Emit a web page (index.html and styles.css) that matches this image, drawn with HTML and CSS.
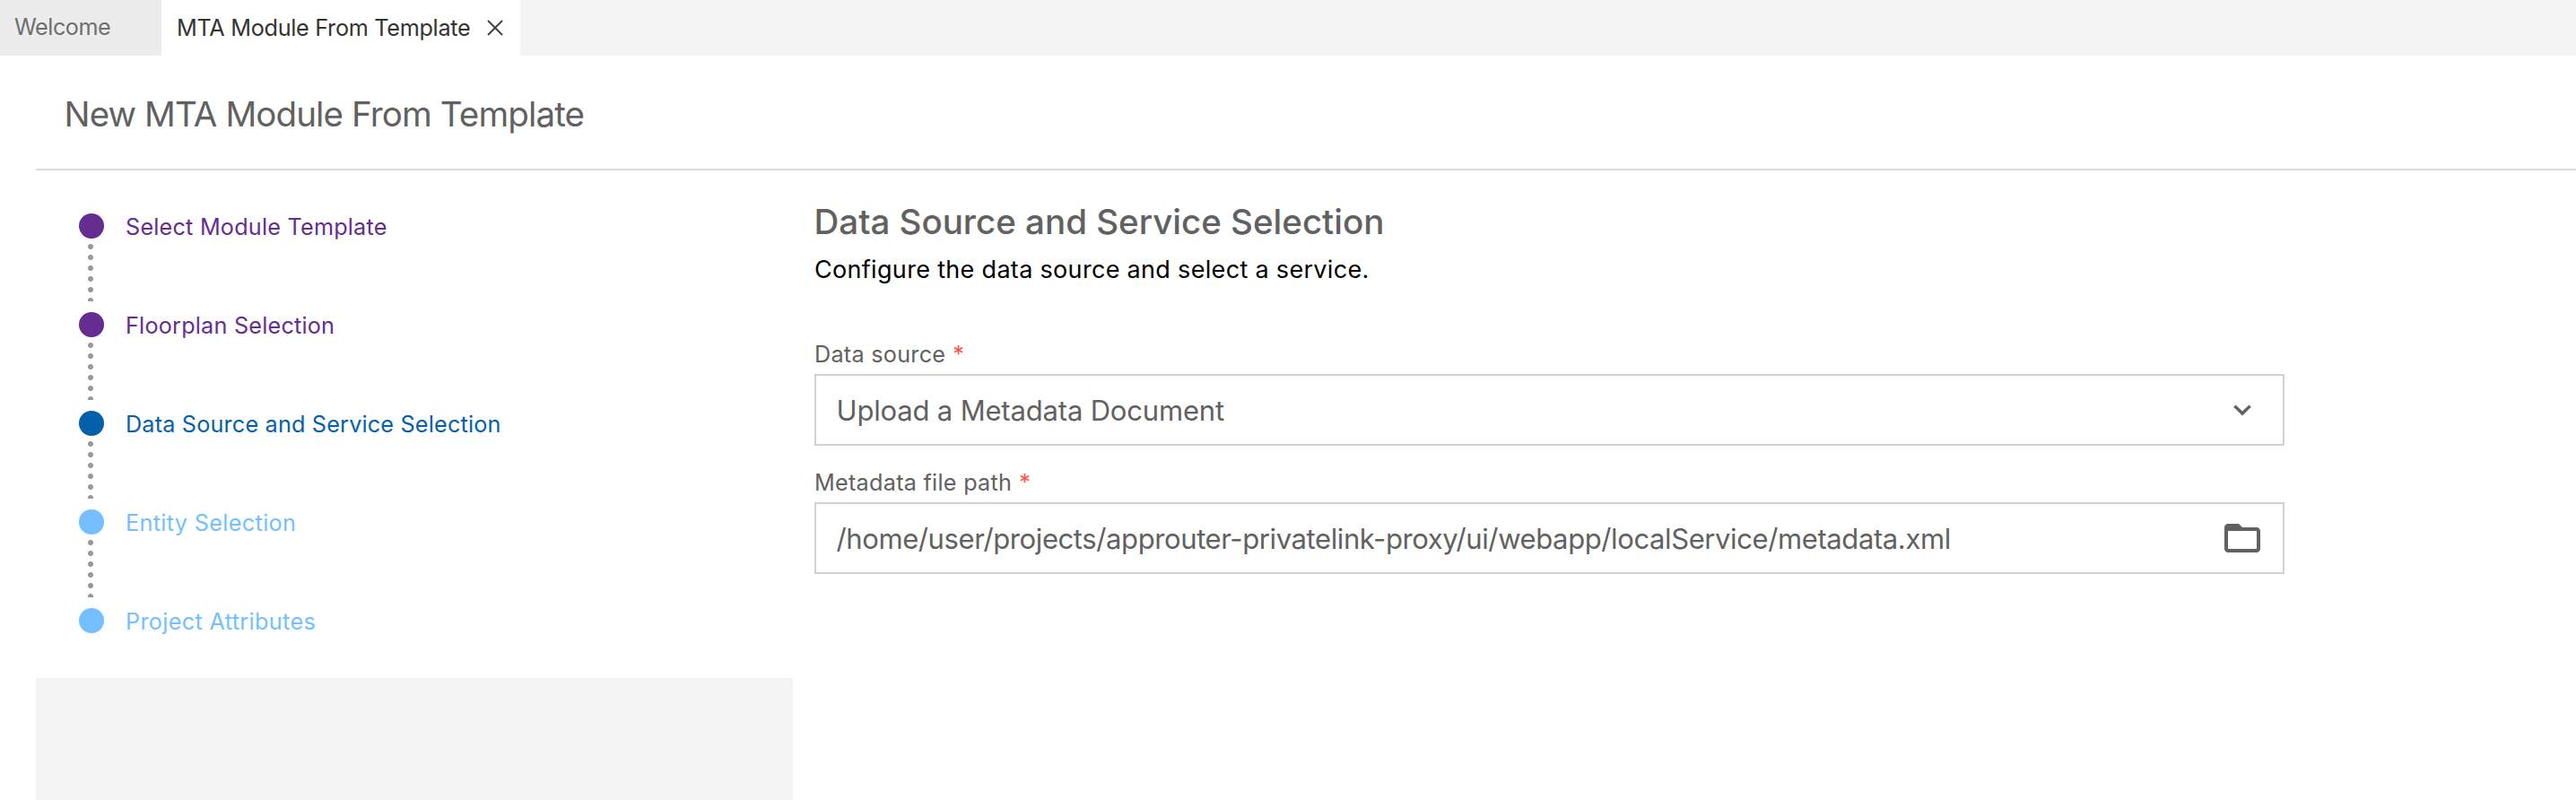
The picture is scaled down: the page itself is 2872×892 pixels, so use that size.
FILE: index.html
```
<!DOCTYPE html>
<html lang="en">
<head>
<meta charset="utf-8">
<title>New MTA Module From Template</title>
<link rel="stylesheet" href="styles.css">
</head>
<body>
<div class="tabbar">
  <div class="tab tab-welcome">Welcome</div>
  <div class="tab tab-active">
    <span class="tab-label">MTA Module From Template</span>
    <svg class="close" width="18" height="18" viewBox="0 0 18 18"><path d="M1 1L17 17M17 1L1 17"/></svg>
  </div>
</div>
<header class="header"><h1 class="title">New MTA Module From Template</h1></header>
<div class="body">
  <nav class="sidebar">
    <ol class="steps">
      <li class="step done">
        <div class="marker"><span class="dot"></span><span class="line"></span></div>
        <span class="step-label s1">Select Module Template</span>
      </li>
      <li class="step done">
        <div class="marker"><span class="dot"></span><span class="line"></span></div>
        <span class="step-label s2">Floorplan Selection</span>
      </li>
      <li class="step current">
        <div class="marker"><span class="dot"></span><span class="line"></span></div>
        <span class="step-label s3">Data Source and Service Selection</span>
      </li>
      <li class="step next">
        <div class="marker"><span class="dot"></span><span class="line"></span></div>
        <span class="step-label s4">Entity Selection</span>
      </li>
      <li class="step next">
        <div class="marker"><span class="dot"></span></div>
        <span class="step-label s4">Project Attributes</span>
      </li>
    </ol>
    <div class="filler"></div>
  </nav>
  <main class="main">
    <h2 class="heading">Data Source and Service Selection</h2>
    <p class="desc">Configure the data source and select a service.</p>
    <div class="field">
      <div class="label">Data source<span class="req">*</span></div>
      <div class="box">
        <span class="value">Upload a Metadata Document</span>
        <svg class="chevron" width="20" height="13" viewBox="0 0 20 13"><path d="M1.4 1.6L10 10L18.6 1.6"/></svg>
      </div>
    </div>
    <div class="field">
      <div class="label">Metadata file path<span class="req">*</span></div>
      <div class="box">
        <span class="value path">/home/user/projects/approuter-privatelink-proxy/ui/webapp/localService/metadata.xml</span>
        <svg class="folder" width="40" height="32" viewBox="2 4 20 16" preserveAspectRatio="none"><path d="M20 6h-8l-2-2H4c-1.100 0-1.990.9-1.990 2L2 18c0 1.100.9 2 2 2h16c1.100 0 2-.9 2-2V8c0-1.100-.9-2-2-2zm0 12H4V8h16v10z"/></svg>
      </div>
    </div>
  </main>
</div>
</body>
</html>
```
FILE: styles.css
```
* { box-sizing: border-box; }
body {
  margin: 0;
  height: 892px;
  display: flex;
  flex-direction: column;
  overflow: hidden;
  background: #fff;
  font-family: Inter, "Liberation Sans", sans-serif;
  font-size: 25.2px;
  color: #616161;
  white-space: nowrap;
}
h1, h2, p, ol { margin: 0; padding: 0; font-weight: 400; }
svg { display: block; flex: none; }

.tabbar { display: flex; height: 62px; background: #f3f3f3; }
.tab-welcome {
  width: 180px;
  padding-left: 16px;
  background: #ececec;
  color: #6f6f6f;
  line-height: 60px;
  letter-spacing: -0.48px;
}
.tab-active {
  display: flex;
  align-items: center;
  width: 400px;
  padding-left: 17px;
  background: #fff;
  color: #333;
  line-height: 62px;
}
.tab-label { width: 346px; letter-spacing: -0.283px; }
.close { fill: none; stroke: #424242; stroke-width: 2; }

.header {
  height: 128px;
  margin-left: 40px;
  padding-left: 31.5px;
  border-bottom: 2px solid #dadada;
}
.title { font-size: 38.5px; line-height: 130px; letter-spacing: -0.87px; }

.body { display: flex; flex: 1; min-height: 0; padding-left: 40px; }
.sidebar { display: flex; flex-direction: column; width: 844px; }
.steps { height: 566px; padding: 48px 0 0 48px; list-style: none; }
.step { display: flex; height: 110px; }
.marker { width: 52px; }
.dot { display: block; width: 28px; height: 28px; border-radius: 50%; background: currentColor; }
.line {
  display: block;
  width: 6px;
  height: 64px;
  margin: 6px 0 0 10px;
  background: radial-gradient(circle at 3px 3px, #999 2.6px, transparent 3.4px) 0 0 / 6px 12px repeat-y;
}
.step-label { line-height: 30px; font-weight: 380; }
.s1 { letter-spacing: 0.22px; }
.s2 { letter-spacing: 0.22px; }
.s3 { letter-spacing: 0.19px; }
.s4 { letter-spacing: 0.35px; }
.done { color: #652d90; }
.current { color: #0460a9; }
.next { color: #74bfff; }
.filler { flex: 1; background: #f3f3f3; }

.main { width: 1663px; padding: 33px 0 0 24px; }
.heading {
  margin-left: -0.5px;
  font-size: 38.5px;
  font-weight: 500;
  line-height: 48px;
  letter-spacing: 0;
}
.desc {
  margin: 12px 0 61px;
  font-size: 27px;
  font-weight: 380;
  line-height: 36px;
  letter-spacing: 0.316px;
  color: #000;
}
.field { margin-bottom: 26px; }
.label { height: 37px; line-height: 30px; letter-spacing: 0.27px; }
.req { margin-left: 8px; color: #ff5252; }
.box {
  display: flex;
  align-items: center;
  justify-content: space-between;
  height: 80px;
  padding: 0 25px 0 22.5px;
  border: 2px solid #d1d1d1;
}
.value { font-size: 31px; line-height: 76px; padding-top: 2px; letter-spacing: -0.172px; }
.path { letter-spacing: -0.394px; }
.chevron { margin-right: 10px; fill: none; stroke: #616161; stroke-width: 3.4; }
.folder { fill: #616161; }
```
